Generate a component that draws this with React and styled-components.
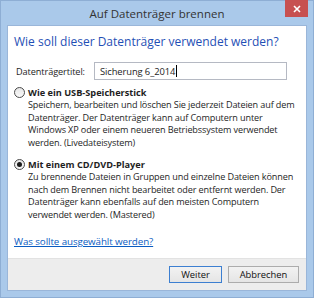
import React from 'react'
import styled, { createGlobalStyle } from 'styled-components'

const GlobalStyle = createGlobalStyle`
  html, body {
    margin: 0;
    padding: 0;
    background: #aac9ea;
  }
  body {
    font-family: 'Open Sans', 'Noto Sans', 'DejaVu Sans', sans-serif;
    color: #1e1e1e;
  }
`

const Window = styled.div`
  box-sizing: border-box;
  width: 314px;
  height: 298px;
  background: #aac9ea;
  border: 1px solid #8eaed4;
  display: flex;
  flex-direction: column;
`

const TitleBar = styled.div`
  height: 24px;
  display: grid;
  grid-template-columns: 1fr auto 1fr;
  align-items: start;
`

const Title = styled.div`
  grid-column: 2;
  padding-top: 5px;
  font-size: 11.5px;
  color: #333;
  white-space: nowrap;
`

const CloseButton = styled.div`
  grid-column: 3;
  justify-self: end;
  margin-right: 5px;
  width: 23px;
  height: 17px;
  margin-top: -1px;
  background: #c75050;
  display: flex;
  align-items: center;
  justify-content: center;
`

const Body = styled.div`
  flex: 1;
  margin: 0 6px 6px 6px;
  background: #fff;
  border: 1px solid #9ab6d9;
  display: flex;
  flex-direction: column;
`

const Content = styled.div`
  flex: 1;
  padding: 8px 6px 0 6px;
`

const Heading = styled.div`
  font-size: 12px;
  line-height: 16px;
  color: #1f4fb5;
  white-space: nowrap;
`

const FieldRow = styled.div`
  display: flex;
  align-items: center;
  margin-top: 12px;
  padding-left: 2px;
`

const Label = styled.label`
  width: 78px;
  font-size: 9.2px;
  letter-spacing: -0.1px;
`

const Input = styled.div`
  box-sizing: border-box;
  width: 193px;
  height: 18px;
  border: 1px solid #b5b9c3;
  padding-left: 5px;
  font-size: 9.4px;
  letter-spacing: -0.1px;
  display: flex;
  align-items: center;
`

const Caret = styled.span`
  display: inline-block;
  width: 1px;
  height: 12px;
  background: #000;
  margin-left: 1px;
`

const Option = styled.div`
  display: grid;
  grid-template-columns: 14px 270px;
  margin-top: ${p => p.$gap}px;
  font-size: 9.1px;
  line-height: 12.5px;
`

const Radio = styled.span`
  box-sizing: border-box;
  width: 11px;
  height: 11px;
  margin-top: 1px;
  border-radius: 50%;
  border: 1px solid #4a4a4a;
  background: linear-gradient(#e6e6e6, #fafafa);
  display: flex;
  align-items: center;
  justify-content: center;
  &::after {
    content: '';
    width: 5px;
    height: 5px;
    border-radius: 50%;
    background: ${p => (p.$checked ? '#1b1b1b' : 'transparent')};
  }
`

const OptionTitle = styled.div`
  font-weight: 700;
  font-size: 9.2px;
  line-height: 13px;
`

const OptionText = styled.div`
  grid-column: 2;
  letter-spacing: -0.12px;
`

const Link = styled.a`
  display: inline-block;
  margin-top: 14px;
  font-size: 9.8px;
  letter-spacing: -0.1px;
  color: #0a5cc2;
  text-decoration: underline;
`

const Footer = styled.div`
  height: 31px;
  background: #ededed;
  border-top: 1px solid #e2e2e2;
  display: flex;
  align-items: center;
  justify-content: flex-end;
  gap: 6px;
  padding-right: 7px;
`

const Button = styled.div`
  box-sizing: border-box;
  width: ${p => p.$w}px;
  height: 17px;
  font-size: 9.4px;
  display: flex;
  align-items: center;
  justify-content: center;
  border: 1px solid ${p => (p.$primary ? '#3c7fd1' : '#acacac')};
  background: linear-gradient(#f2f2f2, #e5e5e5);
  color: #111;
`

const App = () => (
  <>
    <GlobalStyle />
    <Window>
      <TitleBar>
        <Title>Auf Datenträger brennen</Title>
        <CloseButton>
          <svg width="8" height="8" viewBox="0 0 8 8">
            <path d="M1 1L7 7M7 1L1 7" stroke="#fff" strokeWidth="1.6" />
          </svg>
        </CloseButton>
      </TitleBar>
      <Body>
        <Content>
          <Heading>Wie soll dieser Datenträger verwendet werden?</Heading>
          <FieldRow>
            <Label>Datenträgertitel:</Label>
            <Input>
              Sicherung 6_2014<Caret />
            </Input>
          </FieldRow>
          <Option $gap={6}>
            <Radio />
            <OptionTitle>Wie ein USB-Speicherstick</OptionTitle>
            <OptionText>
              Speichern, bearbeiten und löschen Sie jederzeit Dateien auf dem
              Datenträger. Der Datenträger kann auf Computern unter Windows XP
              oder einem neueren Betriebssystem verwendet werden.
              (Livedateisystem)
            </OptionText>
          </Option>
          <Option $gap={9}>
            <Radio $checked />
            <OptionTitle>Mit einem CD/DVD-Player</OptionTitle>
            <OptionText>
              Zu brennende Dateien in Gruppen und einzelne Dateien können nach
              dem Brennen nicht bearbeitet oder entfernt werden. Der
              Datenträger kann ebenfalls auf den meisten Computern verwendet
              werden. (Mastered)
            </OptionText>
          </Option>
          <Link href="#">Was sollte ausgewählt werden?</Link>
        </Content>
        <Footer>
          <Button $w={53} $primary>Weiter</Button>
          <Button $w={71}>Abbrechen</Button>
        </Footer>
      </Body>
    </Window>
  </>
)

export default App
